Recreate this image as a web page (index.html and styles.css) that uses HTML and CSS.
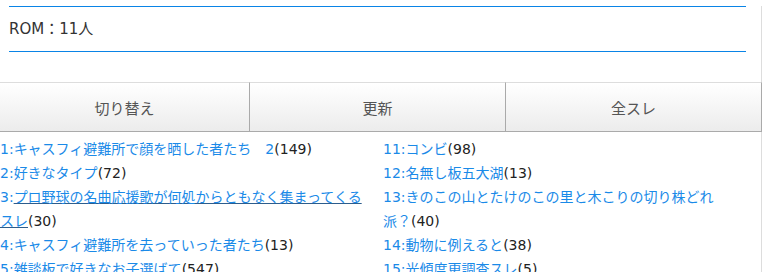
FILE: index.html
```html
<!DOCTYPE html>
<html lang="ja">
<head>
<meta charset="UTF-8">
<meta name="viewport" content="width=device-width, initial-scale=1.0">
<title>掲示板</title>
<link rel="stylesheet" href="styles.css">
</head>
<body>
<div class="page">
  <div class="rom">ROM：11人</div>

  <div class="nav">
    <button class="nav-btn">切り替え</button>
    <button class="nav-btn">更新</button>
    <button class="nav-btn">全スレ</button>
  </div>

  <div class="threads">
    <ul class="col">
      <li><span class="num">1:</span><a href="#">キャスフィ避難所で顔を晒した者たち　2</a>(149)</li>
      <li><span class="num">2:</span><a href="#">好きなタイプ</a>(72)</li>
      <li><span class="num">3:</span><a href="#" class="hover">プロ野球の名曲応援歌が何処からともなく集まってくるスレ</a>(30)</li>
      <li><span class="num">4:</span><a href="#">キャスフィ避難所を去っていった者たち</a>(13)</li>
      <li><span class="num">5:</span><a href="#">雑談板で好きなお子選ばて</a>(547)</li>
    </ul>
    <ul class="col">
      <li><span class="num">11:</span><a href="#">コンビ</a>(98)</li>
      <li><span class="num">12:</span><a href="#">名無し板五大湖</a>(13)</li>
      <li><span class="num">13:</span><a href="#">きのこの山とたけのこの里と木こりの切り株どれ派？</a>(40)</li>
      <li><span class="num">14:</span><a href="#">動物に例えると</a>(38)</li>
      <li><span class="num">15:</span><a href="#">光傾度更調査スレ</a>(5)</li>
    </ul>
  </div>
</div>
</body>
</html>
```

FILE: styles.css
```css
html, body {
  margin: 0;
  padding: 0;
  background: #fff;
  overflow: hidden;
}
body {
  font-family: "DejaVu Sans", "Noto Sans CJK JP", sans-serif;
  font-size: 14px;
  color: #222;
}
.page {
  width: 761px;
  border-right: 1px solid #ddd;
  min-height: 272px;
}
.rom {
  margin: 6px 15px 0 9px;
  border-top: 1px solid #0a84e6;
  border-bottom: 1px solid #0a84e6;
  height: 44px;
  line-height: 44px;
  font-size: 15px;
  color: #333;
}
.nav {
  display: grid;
  grid-template-columns: 250px 256px 256px;
  margin-top: 30px;
  margin-right: -1px;
}
.nav-btn {
  font-family: "DejaVu Sans", "Noto Sans CJK JP", sans-serif;
  font-size: 15px;
  color: #555;
  height: 50px;
  margin: 0;
  padding: 0;
  border: 0;
  border-top: 1px solid #ddd;
  border-bottom: 1px solid #aaa;
  border-right: 1px solid #aaa;
  background: linear-gradient(#fff, #ececec);
}
.threads {
  display: grid;
  grid-template-columns: 375px 357px;
  column-gap: 8px;
  padding-top: 5px;
}
.col {
  list-style: none;
  margin: 0;
  padding: 0;
}
.col li {
  line-height: 24px;
}
.num, .col a {
  color: #1a8ae8;
  text-decoration: none;
}
.col a.hover {
  text-decoration: underline;
  text-decoration-color: #2d5d8c;
}
```
